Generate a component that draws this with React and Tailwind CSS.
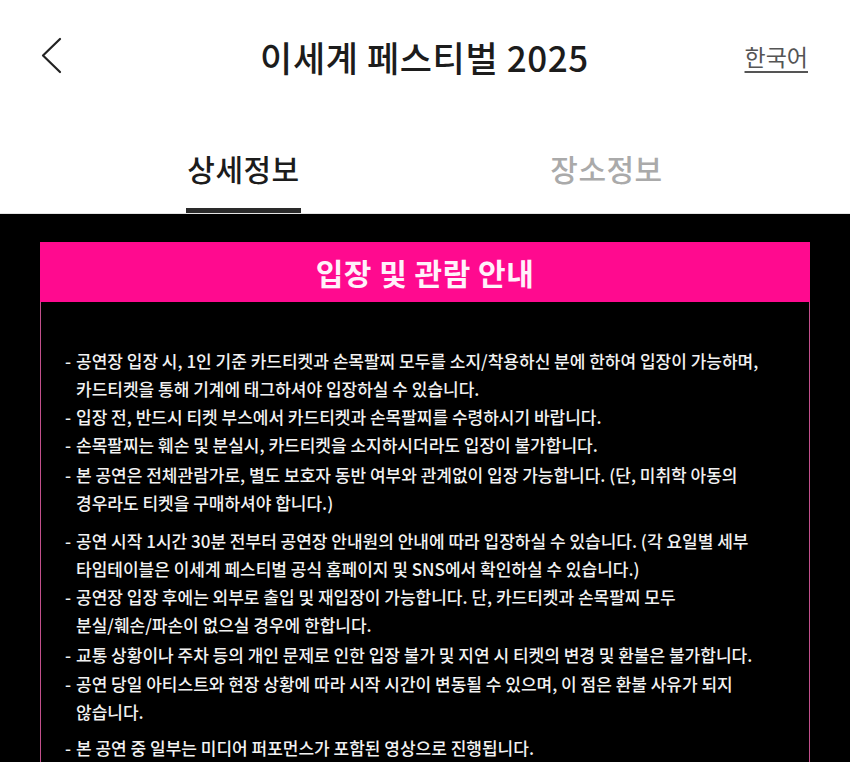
import React from "react";

const items = [
    {
        lines: [
            "공연장 입장 시, 1인 기준 카드티켓과 손목팔찌 모두를 소지/착용하신 분에 한하여 입장이 가능하며,",
            "카드티켓을 통해 기계에 태그하셔야 입장하실 수 있습니다.",
        ],
        gap: "mt-0",
    },
    {
        lines: ["입장 전, 반드시 티켓 부스에서 카드티켓과 손목팔찌를 수령하시기 바랍니다."],
        gap: "mt-0",
    },
    {
        lines: ["손목팔찌는 훼손 및 분실시, 카드티켓을 소지하시더라도 입장이 불가합니다."],
        gap: "mt-0",
    },
    {
        lines: [
            "본 공연은 전체관람가로, 별도 보호자 동반 여부와 관계없이 입장 가능합니다. (단, 미취학 아동의",
            "경우라도 티켓을 구매하셔야 합니다.)",
        ],
        gap: "mt-[2px]",
    },
    {
        lines: [
            "공연 시작 1시간 30분 전부터 공연장 안내원의 안내에 따라 입장하실 수 있습니다. (각 요일별 세부",
            "타임테이블은 이세계 페스티벌 공식 홈페이지 및 SNS에서 확인하실 수 있습니다.)",
        ],
        gap: "mt-[10px]",
    },
    {
        lines: [
            "공연장 입장 후에는 외부로 출입 및 재입장이 가능합니다. 단, 카드티켓과 손목팔찌 모두",
            "분실/훼손/파손이 없으실 경우에 한합니다.",
        ],
        gap: "mt-0",
    },
    {
        lines: ["교통 상황이나 주차 등의 개인 문제로 인한 입장 불가 및 지연 시 티켓의 변경 및 환불은 불가합니다."],
        gap: "mt-[2px]",
    },
    {
        lines: [
            "공연 당일 아티스트와 현장 상황에 따라 시작 시간이 변동될 수 있으며, 이 점은 환불 사유가 되지",
            "않습니다.",
        ],
        gap: "mt-[1px]",
    },
    {
        lines: ["본 공연 중 일부는 미디어 퍼포먼스가 포함된 영상으로 진행됩니다."],
        gap: "mt-[8px]",
    },
];

export default function App() {

    return (

        <div className="w-[850px] min-h-[762px] bg-black font-['Noto_Sans_CJK_KR','Noto_Sans',sans-serif]">

            {/* HEADER */}
            <div className="bg-white h-[112px] grid grid-cols-[1fr_auto_1fr] items-center pl-[41px] pr-[42px]">

                <button className="w-[24px] h-[40px] flex items-center">
                    <svg width="22" height="38" viewBox="0 0 22 38" fill="none">
                        <path
                            d="M19 2 L2 18.5 L19 35"
                            stroke="#222"
                            strokeWidth="2.2"
                            strokeLinecap="round"
                            strokeLinejoin="round"
                        />
                    </svg>
                </button>

                <h1 className="text-[35px] font-medium text-[#1c1c1c] tracking-[0.6px] leading-none">
                    이세계 페스티벌 2025
                </h1>

                <div className="flex justify-end">
                    <span className="text-[23px] text-[#555] underline underline-offset-[5px] decoration-[1.5px] leading-none">
                        한국어
                    </span>
                </div>

            </div>

            {/* TABS */}
            <div className="bg-white h-[102px] grid grid-cols-2 px-[62px] border-b border-[#e4e4e4]">

                <div className="flex flex-col items-center justify-end">
                    <span className="text-[30px] font-medium text-[#1c1c1c] tracking-[0.5px] leading-none mb-[25px]">
                        상세정보
                    </span>
                    <div className="w-[115px] h-[5px] bg-[#2a2a2a]" />
                </div>

                <div className="flex flex-col items-center justify-end">
                    <span className="text-[30px] font-medium text-[#aaaaaa] tracking-[0.5px] leading-none mb-[30px]">
                        장소정보
                    </span>
                </div>

            </div>

            {/* CONTENT */}
            <div className="pt-[28px] px-[40px] pb-[40px]">

                <div className="border border-[#c2508c] border-t-0">

                    <div className="bg-[#ff0a8f] h-[60px] flex items-center justify-center -mx-px">
                        <h2 className="text-[30px] font-bold text-[#fff2fa] tracking-[0.5px] leading-none">
                            입장 및 관람 안내
                        </h2>
                    </div>

                    <ul className="pt-[45px] pl-[24px] pr-[20px] pb-[30px] text-[17px] font-medium text-[#f2f2f2] leading-[28px]">

                        {items.map((item, i) => (
                            <li key={i} className={`flex ${item.gap}`}>
                                <span className="w-[11px] shrink-0">-</span>
                                <div>
                                    {item.lines.map((line, j) => (
                                        <div key={j} className="whitespace-nowrap">
                                            {line}
                                        </div>
                                    ))}
                                </div>
                            </li>
                        ))}

                    </ul>

                </div>

            </div>

        </div>
    );
}
